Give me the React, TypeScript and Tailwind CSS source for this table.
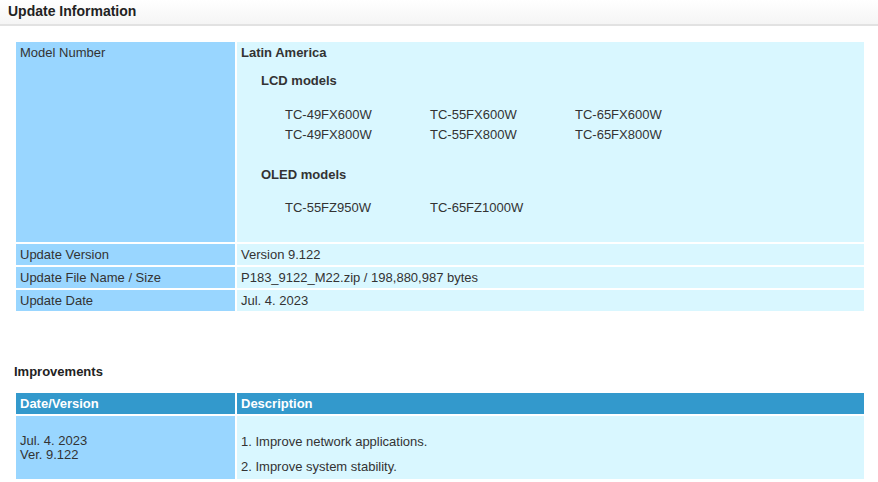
const lcdModels = [
  "TC-49FX600W", "TC-55FX600W", "TC-65FX600W",
  "TC-49FX800W", "TC-55FX800W", "TC-65FX800W",
];

const oledModels = ["TC-55FZ950W", "TC-65FZ1000W"];

const infoRows = [
  { label: "Update Version", value: "Version 9.122" },
  { label: "Update File Name / Size", value: "P183_9122_M22.zip / 198,880,987 bytes" },
  { label: "Update Date", value: "Jul. 4. 2023" },
];

function ModelGrid({ models }: { models: string[] }) {
  return (
    <div className="ml-[44px] grid grid-cols-[145px_145px_145px] leading-[20px]">
      {models.map((m) => (
        <div key={m}>{m}</div>
      ))}
    </div>
  );
}

export default function App() {
  return (
    <div className="w-[878px] bg-white text-[13px] text-[#333] font-['Liberation_Sans',Arial,sans-serif]">
      <div className="h-[26px] bg-gradient-to-b from-white to-[#f5f5f5] border-b-2 border-[#e2e2e2] px-[8px] flex items-center">
        <h1 className="text-[14px] font-bold text-[#222] leading-[16px] -mt-[2px]">Update Information</h1>
      </div>

      {/* update info table */}
      <div className="ml-[16px] mt-[16px] w-[848px] grid grid-cols-[219px_1fr] gap-[2px] leading-[15px]">
        <div className="bg-[#99d6ff] px-[4px] pt-[3px]">Model Number</div>
        <div className="bg-[#d9f7ff] px-[4px] pt-[3px] pb-[24px]">
          <div className="font-bold">Latin America</div>
          <div className="ml-[20px] mt-[13px] font-bold">LCD models</div>
          <div className="mt-[17px]">
            <ModelGrid models={lcdModels} />
          </div>
          <div className="ml-[20px] mt-[22px] font-bold">OLED models</div>
          <div className="mt-[16px]">
            <ModelGrid models={oledModels} />
          </div>
        </div>
        {infoRows.map((r) => (
          <div key={r.label} className="contents">
            <div className="bg-[#99d6ff] px-[4px] py-[3px]">{r.label}</div>
            <div className="bg-[#d9f7ff] px-[4px] py-[3px]">{r.value}</div>
          </div>
        ))}
      </div>

      <h2 className="ml-[14px] mt-[53px] font-bold text-[#222] leading-[15px]">Improvements</h2>

      {/* improvements table */}
      <div className="ml-[16px] mt-[14px] w-[848px] grid grid-cols-[219px_1fr] gap-[2px]">
        <div className="bg-[#3399cc] px-[4px] h-[21px] flex items-center font-bold text-white">Date/Version</div>
        <div className="bg-[#3399cc] px-[4px] h-[21px] flex items-center font-bold text-white">Description</div>
        <div className="bg-[#99d6ff] px-[4px] h-[63px] flex flex-col justify-center leading-[14px]">
          <div>Jul. 4. 2023</div>
          <div>Ver. 9.122</div>
        </div>
        <div className="bg-[#d9f7ff] px-[4px] pt-[18px] leading-[15px]">
          <p>1. Improve network applications.</p>
          <p className="mt-[10px]">2. Improve system stability.</p>
        </div>
      </div>
      <div className="h-[12px]" />
    </div>
  );
}
